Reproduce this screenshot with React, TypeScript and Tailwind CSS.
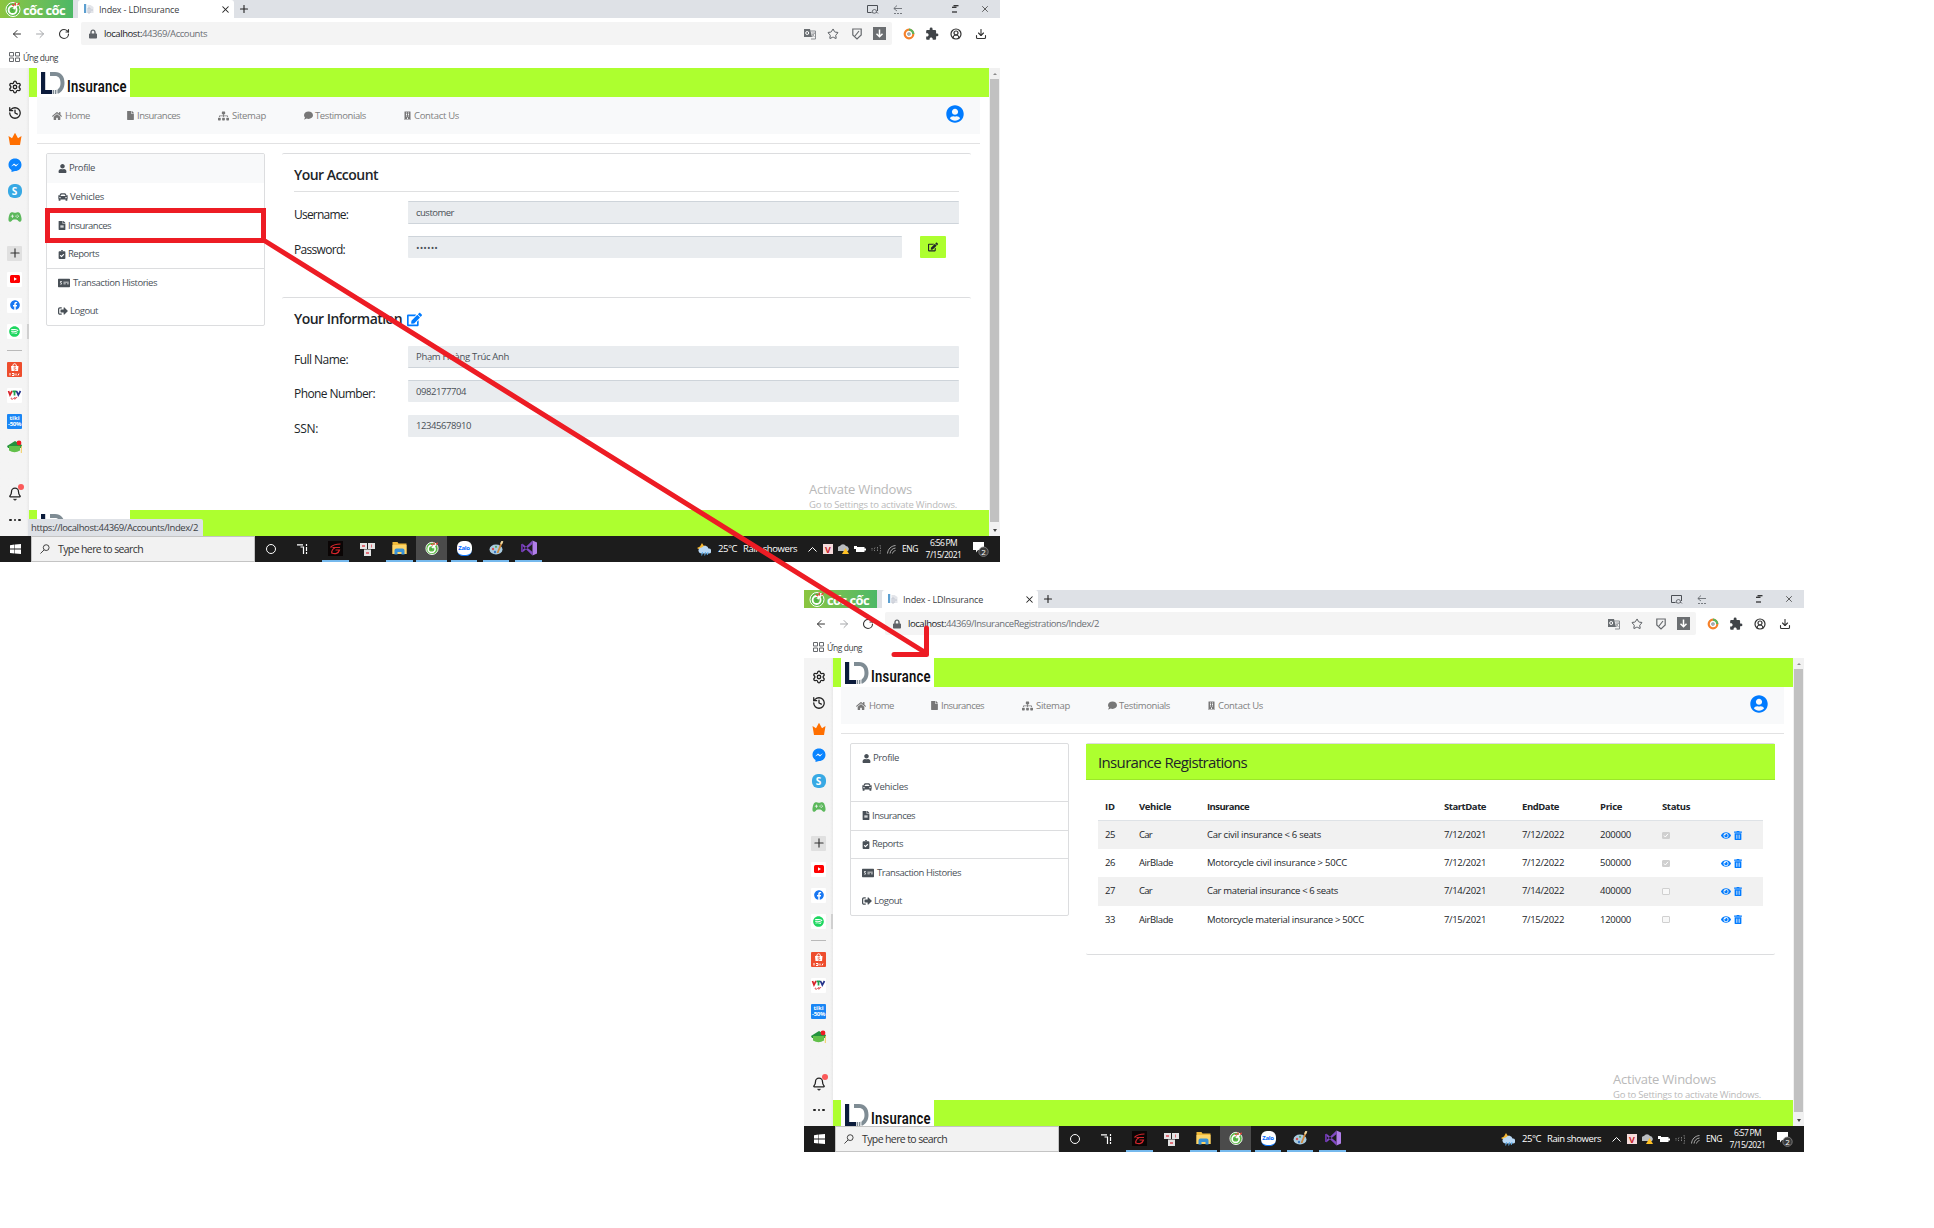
import { useLayoutEffect, useRef, useState, type ReactNode } from 'react';
import {
  FaHome, FaFile, FaSitemap, FaComment, FaBuilding, FaUserCircle, FaUser, FaCar, FaFileAlt,
  FaClipboardCheck, FaMoneyCheckAlt, FaSignOutAlt, FaEdit, FaEye, FaTrashAlt, FaSpotify,
  FaFacebook, FaLock, FaGraduationCap,
} from 'react-icons/fa';
import { MdExtension } from 'react-icons/md';
import { IoGameController } from 'react-icons/io5';
import { ArrowLeft, ArrowRight, RotateCw, X, Plus, Settings, History, Bell, Star, CircleUserRound, Download } from 'lucide-react';

/** One line of text whose letter spacing is adjusted so that it spans `w` pixels. */
function Fit({ w, className = '', children }: { w: number; className?: string; children: ReactNode }) {
  const ref = useRef<HTMLSpanElement>(null);
  const [spacing, setSpacing] = useState(0);
  useLayoutEffect(() => {
    const el = ref.current;
    if (!el) return;
    el.style.letterSpacing = '0px';
    const natural = el.getBoundingClientRect().width;
    const count = (el.textContent ?? '').length;
    setSpacing((w - natural) / count);
    el.style.letterSpacing = `${(w - natural) / count}px`;
  }, [w]);
  return (
    <span ref={ref} style={{ letterSpacing: `${spacing}px` }} className={`inline-block shrink-0 whitespace-nowrap ${className}`}>
      {children}
    </span>
  );
}

function CocCocMark({ className }: { className: string }) {
  return (
    <svg viewBox="0 0 16 16" className={className}>
      <circle cx="8" cy="8.5" r="7" fill="#5cb946" stroke="#fff" strokeWidth="1" />
      <circle cx="7.6" cy="9" r="4" fill="none" stroke="#fff" strokeWidth="1.8" />
      <path d="M7.5 9 13 3" stroke="#fff" strokeWidth="2" />
      <path d="M7 3.5 9 5M10 1.5l.6 3M12.5 4l2-2" stroke="#ee4035" strokeWidth="1.3" />
      <circle cx="7.6" cy="9" r="1.4" fill="#4bab43" />
    </svg>
  );
}

function Logo({ markOnly = false }: { markOnly?: boolean }) {
  return (
    <div className="flex h-[29px] w-[93px] shrink-0 items-start bg-white pl-[4px]">
      <svg viewBox="0 0 24 22" className="mt-[4px] h-[22px] w-[24px] shrink-0">
        <path d="M0 0h4.200v18h7v4H0z" fill="#0b1b3b" />
        <path d="M9 0h5c6 0 9.500 4 9.500 11 0 5-2.500 9-6.500 10.800V17c1.800-1.200 2.500-3.300 2.500-6 0-4.500-2-7-5.500-7H9z" fill="#7f8c94" />
        <path d="M12 18h1.200v4H12zM14 18h1.200v4H14zM15.800 17.500h.8v4h-.8z" fill="#7f8c94" />
      </svg>
      {!markOnly && (
        <span className="mt-[11px] ml-[2px] inline-block origin-left scale-x-[0.79] font-['Roboto'] text-[16.5px] leading-[15px] font-semibold tracking-[0.3px] text-[#111]">Insurance</span>
      )}
    </div>
  );
}

function TabStrip() {
  return (
    <div className="flex h-[18px] bg-[#dee1e6]">
      <div className="flex h-[18px] w-[73px] items-center bg-linear-to-r from-[#8bc53f] to-[#4cb866] pl-[5px]">
        <CocCocMark className="h-[16px] w-[16px] shrink-0" />
        <Fit w={42} className="mt-px ml-[2px] font-['Open_Sans'] text-[13px] leading-[16px] font-bold text-white">cốc cốc</Fit>
      </div>
      <div className="ml-[5px] flex h-[18px] w-[156px] items-center rounded-t-[3px] bg-white pl-[6px]">
        <svg viewBox="0 0 10 10" className="h-[10px] w-[10px]">
          <path d="M0 0h2.200v9H0z" fill="#5c9fd0" />
          <path d="M3.500 1h3l3 2v6h-6z" fill="#e3e5ea" />
          <path d="M4 4h2v5H4zM7 6h2" stroke="#c4c8d2" fill="none" />
        </svg>
        <Fit w={80} className="mt-px ml-[5px] text-[9px] leading-[14px] text-[#3c4043]">Index - LDInsurance</Fit>
        <X className="ml-[41px] h-[11px] w-[11px] text-[#222]" strokeWidth={2.200} />
      </div>
      <Plus className="mt-[3px] ml-[4px] h-[12px] w-[12px] text-[#222]" strokeWidth={2.200} />
      <div className="ml-auto flex h-[18px] items-center text-[#333]">
        <svg viewBox="0 0 12 9" className="h-[9px] w-[12px]" fill="none" stroke="#4b4f55">
          <path d="M4.500 7.500h-4v-7h10v5.500" />
          <path d="M5 7.500q0-3 2.500-3t2 3q-2 1.500-4.500 0M9.500 7l1.500 1.500" strokeWidth=".8" />
        </svg>
        <svg viewBox="0 0 10 9" className="ml-[14px] h-[9px] w-[10px]" fill="none" stroke="#6a6e74" strokeWidth=".9">
          <path d="M4 .5.8 3.500 4 6M1 3.500h8" />
          <path d="M1 8.500h8" strokeDasharray="2 1" />
        </svg>
        <svg viewBox="0 0 7 8" className="ml-[49px] h-[8px] w-[7px]" fill="none" stroke="#000">
          <path d="M1.500.8h5M0 2.200h4.500M0 7h5" strokeWidth="1.100" />
        </svg>
        <X className="mr-[10px] ml-[21px] h-[10px] w-[10px]" strokeWidth={1.800} />
      </div>
    </div>
  );
}

function Toolbar({ path }: { path: ReactNode }) {
  return (
    <div className="flex h-[31px] items-center bg-white">
      <ArrowLeft className="ml-[11px] h-[12px] w-[12px] text-[#333]" strokeWidth={2} />
      <ArrowRight className="ml-[11px] h-[12px] w-[12px] text-[#a5a7aa]" strokeWidth={2} />
      <RotateCw className="ml-[12px] h-[12px] w-[12px] text-[#333]" strokeWidth={2.200} />
      <div className="ml-[11px] flex h-[23px] w-[811px] items-center rounded-[2px] bg-[#f4f4f4] pl-[8px]">
        <FaLock className="h-[10px] w-[8px] text-[#5f6368]" />
        <div className="ml-[7px] flex text-[9.5px] leading-[14px]">
          <Fit w={38} className="text-[#202124]">localhost:</Fit>
          {path}
        </div>
        <div className="mr-[6px] ml-auto flex items-center">
          <svg viewBox="0 0 12 12" className="h-[12px] w-[12px]">
            <path d="M0 1h6l2 8H0z" fill="#6a6e72" />
            <path d="M6 3h5.500v8H7" fill="none" stroke="#8b8e92" />
            <circle cx="3.200" cy="5" r="1.500" fill="none" stroke="#fff" />
            <path d="M7.500 5h3.500M8 9l2.500-4M8 6l2.500 3" stroke="#8b8e92" strokeWidth=".8" />
          </svg>
          <Star className="ml-[11px] h-[12px] w-[12px] text-[#55595e]" strokeWidth={2} />
          <svg viewBox="0 0 10 12" className="ml-[13px] h-[12px] w-[10px]" fill="none" stroke="#66696d" strokeWidth="1.200">
            <path d="M.8 1h8.400v6L5 11 .8 7zM3 8l4-5" />
          </svg>
          <svg viewBox="0 0 13 13" className="ml-[11px] h-[13px] w-[13px]">
            <path d="M0 0h13v13H0z" fill="#6b6e71" />
            <path d="M6.500 2.500v7M3.500 6.700l3 3 3-3" fill="none" stroke="#fff" strokeWidth="1.500" />
          </svg>
        </div>
      </div>
      <svg viewBox="0 0 12 12" className="ml-[11px] h-[12px] w-[12px]" fill="none" strokeWidth="2.200">
        <circle cx="6" cy="6" r="4.300" stroke="#f5812a" />
        <path d="M6 1.700A4.300 4.300 0 0 1 10.300 6" stroke="#5ab55e" />
        <circle cx="6" cy="6" r="1.200" stroke="#8a9199" strokeWidth="1.200" />
      </svg>
      <MdExtension className="ml-[10px] h-[14px] w-[14px] text-[#404448]" />
      <CircleUserRound className="ml-[11px] h-[12px] w-[12px] text-[#333]" strokeWidth={2.400} />
      <Download className="ml-[13px] h-[12px] w-[12px] text-[#333]" strokeWidth={2.200} />
    </div>
  );
}

function Slot({ children, box = '' }: { children: ReactNode; box?: string }) {
  return (
    <div className="flex h-[26px] shrink-0 items-center pl-[7px]">
      <div className={`flex h-[15px] w-[15px] items-center justify-center overflow-hidden rounded-[1px] ${box}`}>{children}</div>
    </div>
  );
}

function BrowserRail() {
  return (
    <div className="flex h-[468px] w-[29px] shrink-0 flex-col bg-linear-to-r from-[#f4f4f4] from-90% to-[#e9e9e9] pt-[6px]">
      <Slot><Settings className="h-[14px] w-[14px] text-[#222]" strokeWidth={2.200} /></Slot>
      <Slot><History className="h-[14px] w-[14px] text-[#222]" strokeWidth={2.200} /></Slot>
      <Slot>
        <svg viewBox="0 0 14 14" className="h-[14px] w-[14px]"><path d="M.5 4 4 6.200 7 .8l3 5.400L13.500 4 12 13H2z" fill="#ff6f00" /></svg>
      </Slot>
      <Slot>
        <svg viewBox="0 0 14 14" className="h-[14px] w-[14px]">
          <path d="M7 .5c3.800 0 6.500 2.700 6.500 6.200S10.800 13 7 13l-3.500 1V12C1.600 10.800.5 9 .5 6.700.5 3.200 3.200.5 7 .5z" fill="#0a84ff" />
          <path d="m3 8.500 3-3 2 1.500 3-1.800-3 3.300-2-1.500z" fill="#fff" />
        </svg>
      </Slot>
      <Slot>
        <div className="flex h-[14px] w-[14px] items-center justify-center rounded-[6px] bg-[#38a9e4] text-[10px] leading-none font-bold text-white">S</div>
      </Slot>
      <Slot><IoGameController className="h-[14px] w-[14px] text-[#5cb85c]" /></Slot>
      <div className="h-[10px] shrink-0" />
      <Slot box="bg-[#e0e0e0]"><Plus className="h-[14px] w-[14px] text-[#333]" strokeWidth={2} /></Slot>
      <Slot box="bg-white">
        <svg viewBox="0 0 10 8" className="h-[8px] w-[10px]"><rect width="10" height="8" rx="1.500" fill="#f00" /><path d="m4 2.200 3 1.800-3 1.800z" fill="#fff" /></svg>
      </Slot>
      <Slot box="bg-white"><FaFacebook className="h-[10px] w-[10px] text-[#1877f2]" /></Slot>
      <div className="flex">
        <div className="w-[29px]"><Slot box="bg-white"><FaSpotify className="h-[11px] w-[11px] text-[#1ed760]" /></Slot></div>
        <div className="mt-[6px] -ml-[2px] h-[15px] w-[2px] bg-[#d0d0d0]" />
      </div>
      <div className="mx-[7px] mt-[6px] h-px shrink-0 bg-[#b9b9b9]" />
      <div className="h-[5px] shrink-0" />
      <Slot box="bg-[#ee4d2d]">
        <svg viewBox="0 0 15 15" className="h-[15px] w-[15px]">
          <path d="M4 4h7.500l-.5 5H4.500z" fill="#fff" />
          <path d="M5.800 4c0-3 3.600-3 3.600 0" fill="none" stroke="#fff" />
          <path d="M9 5.500c-1-.8-2.500-.3-2 .8s2 .3 1.800 1.200-1.500.8-2 .3" fill="none" stroke="#ee4d2d" strokeWidth=".8" />
          <path d="M3 11v2.500M5 11.500h2v2H5M9 11.500v2M11 13.500l1-2" stroke="#fff" fill="none" />
        </svg>
      </Slot>
      <Slot box="bg-white">
        <svg viewBox="0 0 15 15" className="h-[15px] w-[15px]" fill="none">
          <path d="m1.500 3 1.500 4 2-4" stroke="#d8232a" strokeWidth="1.700" />
          <path d="M5.500 3.400h4M7.500 3v4.500" stroke="#1f9d4d" strokeWidth="1.700" />
          <path d="m9.500 3 1.800 4L13.500 3" stroke="#26348b" strokeWidth="1.700" />
          <path d="M5 9.500c-1.500 1-.5 2.500.8 1.500s3-2.500 2.200-1-.5 1.500.8.500L10 9" stroke="#d8232a" strokeWidth=".8" />
        </svg>
      </Slot>
      <Slot box="flex-col bg-[#1a86f5] text-white">
        <span className="text-[6px] leading-[6px] font-bold">tiki</span>
        <span className="text-[6px] leading-[7px] font-bold tracking-[-0.3px]">-50%</span>
      </Slot>
      <Slot>
        <svg viewBox="0 0 15 14" className="h-[14px] w-[15px]">
          <path d="M0 6 8 1l7 4-1 3H1z" fill="#23923d" />
          <path d="M2 6h11v4.500q-5.500 3.500-11 0z" fill="#62c04a" />
          <path d="M14.300 6v7" stroke="#f3c74a" strokeWidth=".9" />
          <circle cx="12" cy="3" r="2.400" fill="#ee1c25" />
        </svg>
      </Slot>
      <div className="h-[21px] shrink-0" />
      <div className="relative">
        <Slot><Bell className="h-[14px] w-[14px] text-[#222]" strokeWidth={2.200} /></Slot>
        <div className="absolute top-[3px] left-[18px] h-[6px] w-[6px] rounded-full bg-[#fb5a5a]" />
      </div>
      <div className="flex h-[26px] items-center gap-[2px] pl-[9px]">
        <i className="h-[2.500px] w-[2.500px] rounded-full bg-[#222]" />
        <i className="h-[2.500px] w-[2.500px] rounded-full bg-[#222]" />
        <i className="h-[2.500px] w-[2.500px] rounded-full bg-[#222]" />
      </div>
    </div>
  );
}

function SiteNav() {
  return (
    <div className="ml-[8px] h-[37px] w-[943px] bg-[#f8f9fa] text-[9.5px] leading-[14px] text-[#808080]">
      <div className="flex h-[37px] items-center pl-[15px]">
        <div className="flex w-[75px] items-center"><FaHome className="h-[10px] w-[10px] text-[#777]" /><Fit w={25} className="ml-[3px]">Home</Fit></div>
        <div className="flex w-[91px] items-center"><FaFile className="h-[9px] w-[7px] text-[#777]" /><Fit w={43} className="ml-[3px]">Insurances</Fit></div>
        <div className="flex w-[86px] items-center"><FaSitemap className="h-[10px] w-[11px] text-[#777]" /><Fit w={34} className="ml-[3px]">Sitemap</Fit></div>
        <div className="flex w-[100px] items-center"><FaComment className="h-[9px] w-[9px] text-[#777]" /><Fit w={51} className="ml-[2px]">Testimonials</Fit></div>
        <div className="flex items-center"><FaBuilding className="h-[9px] w-[7px] text-[#777]" /><Fit w={45} className="ml-[3px]">Contact Us</Fit></div>
        <FaUserCircle className="mr-[16px] mb-[3px] ml-auto h-[18px] w-[18px] text-[#007bff]" />
      </div>
    </div>
  );
}

const menu = [
  { label: 'Profile', w: 26, Icon: FaUser, icon: 'h-[9px] w-[9px]', gap: 'ml-[2px]', line: '' },
  { label: 'Vehicles', w: 34, Icon: FaCar, icon: 'h-[10px] w-[10px]', gap: 'ml-[2px]', line: '' },
  { label: 'Insurances', w: 43, Icon: FaFileAlt, icon: 'h-[9px] w-[8px]', gap: 'ml-[2px]', line: 'border-t border-[#dcdddf]' },
  { label: 'Reports', w: 31, Icon: FaClipboardCheck, icon: 'h-[9px] w-[8px]', gap: 'ml-[2px]', line: 'border-t border-[#dcdddf]' },
  { label: 'Transaction Histories', w: 84, Icon: FaMoneyCheckAlt, icon: 'h-[12px] w-[12px]', gap: 'ml-[3px]', line: 'border-t border-[#dcdddf]' },
  { label: 'Logout', w: 28, Icon: FaSignOutAlt, icon: 'h-[10px] w-[10px]', gap: 'ml-[2px]', line: '' },
];

function AccountMenu({ active }: { active: boolean }) {
  return (
    <div className="grid h-[173px] w-[219px] shrink-0 grid-rows-6 overflow-hidden rounded-[2px] border border-[#dcdddf] text-[9.5px] leading-[14px] text-[#495057]">
      {menu.map(({ label, w, Icon, icon, gap, line }, i) => (
        <div key={label} className={`flex items-center pl-[11px] ${line} ${active && i === 0 ? 'bg-[#f8f9fa]' : ''}`}>
          <Icon className={icon} />
          <Fit w={w} className={gap}>{label}</Fit>
        </div>
      ))}
    </div>
  );
}

function Field({ label, w, value, vw, box, gap }: { label: string; w: number; value: string; vw: number; box: string; gap: string }) {
  return (
    <div className={`flex ${gap}`}>
      <div className="h-[22px] w-[114px] pt-[5px] text-[12px] leading-[17px] text-[#212529]"><Fit w={w}>{label}</Fit></div>
      <div className={`flex items-center rounded-[1px] border-[#ced4da] bg-[#e9ecef] pl-[8px] text-[9.5px] leading-[14px] text-[#495057] ${box}`}>
        <Fit w={vw}>{value}</Fit>
      </div>
    </div>
  );
}

function AccountPage() {
  return (
    <div className="ml-[17px] w-[689px]">
      <div className="h-[131px] rounded-[2px] border-t border-[#dcdddf] pl-[12px]">
        <h5 className="flex h-[37px] items-center pt-[4px] text-[14px] leading-[20px] font-semibold text-[#212529]"><Fit w={84}>Your Account</Fit></h5>
        <div className="mr-[12px] h-px bg-[#dfe0e1]" />
        <Field gap="mt-[9px]" label="Username:" w={54} value="customer" vw={38} box="w-[551px] h-[23px] border-y" />
        <div className="mt-[12px] flex">
          <Field gap="" label="Password:" w={51} value="••••••" vw={22} box="w-[494px] h-[22px] border-t" />
          <button className="ml-[18px] flex h-[22px] w-[26px] items-center justify-center rounded-[1px] bg-[#adff2f] text-[#212529]"><FaEdit className="h-[10px] w-[10px]" /></button>
        </div>
      </div>
      <div className="mt-[13px] h-[164px] rounded-[2px] border-t border-[#dcdddf] pl-[12px]">
        <h5 className="flex h-[48px] items-center pb-[6px] text-[14px] leading-[20px] font-semibold text-[#212529]">
          <Fit w={108}>Your Information</Fit>
          <FaEdit className="ml-[5px] h-[15px] w-[15px] text-[#007bff]" />
        </h5>
        <Field gap="" label="Full Name:" w={54} value="Phạm Hoàng Trúc Anh" vw={93} box="w-[551px] h-[22px] border-b" />
        <Field gap="mt-[12px]" label="Phone Number:" w={81} value="0982177704" vw={50} box="w-[551px] h-[22px] border-t" />
        <Field gap="mt-[13px]" label="SSN:" w={24} value="12345678910" vw={55} box="w-[551px] h-[22px]" />
      </div>
    </div>
  );
}

const rows = [
  { id: '25', vehicle: 'Car', vw: 13, name: 'Car civil insurance < 6 seats', nw: 114, start: '7/12/2021', end: '7/12/2022', price: '200000', on: true },
  { id: '26', vehicle: 'AirBlade', vw: 34, name: 'Motorcycle civil insurance > 50CC', nw: 140, start: '7/12/2021', end: '7/12/2022', price: '500000', on: true },
  { id: '27', vehicle: 'Car', vw: 13, name: 'Car material insurance < 6 seats', nw: 131, start: '7/14/2021', end: '7/14/2022', price: '400000', on: false },
  { id: '33', vehicle: 'AirBlade', vw: 34, name: 'Motorcycle material insurance > 50CC', nw: 157, start: '7/15/2021', end: '7/15/2022', price: '120000', on: false },
];

function RegistrationsPage() {
  return (
    <div className="ml-[17px] flex h-[212px] w-[689px] flex-col rounded-[2px] border-y border-[#dcdddf]">
      <div className="flex h-[36px] items-center border-b border-[#9be62a] bg-[#adff2f] pl-[12px] text-[15px] leading-[20px] text-[#212529]"><Fit w={149}>Insurance Registrations</Fit></div>
      <div className="mx-[12px] mt-[12px] text-[9.5px] leading-[14px] text-[#212529]">
        <div className="grid h-[29px] grid-cols-[34px_68px_237px_78px_78px_62px_59px_50px] items-center border-b border-[#dee2e6] pt-px pl-[7px] font-bold">
          <Fit w={10} className="justify-self-start">ID</Fit>
          <Fit w={32} className="justify-self-start">Vehicle</Fit>
          <Fit w={42} className="justify-self-start">Insurance</Fit>
          <Fit w={42} className="justify-self-start">StartDate</Fit>
          <Fit w={37} className="justify-self-start">EndDate</Fit>
          <Fit w={22} className="justify-self-start">Price</Fit>
          <Fit w={28} className="justify-self-start">Status</Fit>
        </div>
        {rows.map((r) => (
          <div key={r.id} className="grid h-[28.2px] grid-cols-[34px_68px_237px_78px_78px_62px_59px_50px] items-center pl-[7px] even:bg-[#f1f1f1]">
            <Fit w={10} className="justify-self-start">{r.id}</Fit>
            <Fit w={r.vw} className="justify-self-start">{r.vehicle}</Fit>
            <Fit w={r.nw} className="justify-self-start">{r.name}</Fit>
            <Fit w={42} className="justify-self-start">{r.start}</Fit>
            <Fit w={42} className="justify-self-start">{r.end}</Fit>
            <Fit w={31} className="justify-self-start">{r.price}</Fit>
            <div className={`flex h-[7px] w-[8px] items-center justify-center rounded-[1px] border ${r.on ? 'border-[#cfcfcf] bg-[#cfcfcf]' : 'border-[#d0d0d0] bg-[#f8f8f8]'}`}>
              {r.on && <svg viewBox="0 0 6 5" className="h-[5px] w-[6px]"><path d="m1 2.500 1.300 1.500L5 .8" fill="none" stroke="#fff" /></svg>}
            </div>
            <div className="flex items-center text-[#007bff]"><FaEye className="h-[11px] w-[10px]" /><FaTrashAlt className="ml-[3px] h-[9px] w-[8px]" /></div>
          </div>
        ))}
      </div>
    </div>
  );
}

function TaskItem({ children, className = '' }: { children: ReactNode; className?: string }) {
  return <div className={`flex h-[26px] shrink-0 items-center justify-center border-[#76b9ed] ${className}`}>{children}</div>;
}

function Taskbar({ time }: { time: string }) {
  return (
    <div className="flex h-[26px] bg-[#1c1c1c] text-white">
      <div className="flex h-[26px] w-[31px] items-center pl-[10px]">
        <svg viewBox="0 0 11 10" className="h-[10px] w-[11px]" fill="#fff"><path d="M0 1.200 4.500.6v4H0zM5 .5 11 0v4.600H5zM0 5.400h4.500v4L0 8.900zM5 5.400h6V10l-6-.6z" /></svg>
      </div>
      <div className="flex h-[26px] w-[224px] items-center border border-[#c4c4c4] bg-[#f2f2f2] pl-[8px]">
        <svg viewBox="0 0 11 11" className="h-[10px] w-[10px]" fill="none" stroke="#333"><circle cx="6.800" cy="4" r="3.200" /><path d="M4.500 6.500.5 10.500" /></svg>
        <Fit w={85} className="ml-[8px] text-[10.5px] leading-[14px] text-[#333]">Type here to search</Fit>
      </div>
      <TaskItem className="w-[31px]"><div className="h-[10px] w-[10px] rounded-full border-[1.500px] border-white" /></TaskItem>
      <TaskItem className="w-[33px]">
        <svg viewBox="0 0 11 10" className="h-[10px] w-[11px]" fill="none" stroke="#fff"><path d="M0 .8h6M3.500 3H6.500v7" strokeWidth="1.200" /><path d="M9.500 0v2M9.500 3v4M9.500 8v2" strokeWidth="1.200" /></svg>
      </TaskItem>
      <TaskItem className="ml-[3px] w-[27px] border-b-2">
        <svg viewBox="0 0 15 15" className="mt-px h-[15px] w-[15px]"><path d="M0 0h15v15H0z" fill="#0a0505" /><path d="M2.500 6.500C5 3.500 8 3 12.500 3M4.500 6.500h7.500M4 12.500C3 10 5 7.500 7 7M4 12c3 1.500 6.500.5 7.500-3H7.500" fill="none" stroke="#d5262c" strokeWidth="1.200" /></svg>
      </TaskItem>
      <TaskItem className="w-[37px]">
        <svg viewBox="0 0 15 13" className="h-[13px] w-[15px]"><path d="M0 0h7v6H0zM8 0h7v6H8zM4 6.500h7V13H4z" fill="#e3e3e3" /><path d="M2 2h3v2H2zM11 1.500h1v3h-1zM6 9h3v2H6z" fill="#e0707a" /></svg>
      </TaskItem>
      <TaskItem className="w-[27px] border-b-2">
        <svg viewBox="0 0 15 13" className="h-[13px] w-[15px]"><path d="M.5 0h5l1 1.500h8V12H.5z" fill="#f0b93a" /><path d="M.5 3h14v9H.5z" fill="#fdd56a" /><path d="M2.500 12.500V8.500q0-2 2-2h6q2 0 2 2v4h-3V10h-4v2.500z" fill="#3a93d8" /></svg>
      </TaskItem>
      <TaskItem className="ml-[3px] w-[31px] border-b-2 bg-[#4b4b4b]"><CocCocMark className="h-[14px] w-[14px]" /></TaskItem>
      <TaskItem className="ml-[4px] w-[26px] border-b-2">
        <div className="flex h-[15px] w-[15px] items-center justify-center overflow-hidden rounded-[6px] border-b border-[#0573ff] bg-white text-[6px] leading-none font-bold tracking-[-0.3px] text-[#0068ff]">Zalo</div>
      </TaskItem>
      <TaskItem className="ml-[6px] w-[26px] border-b-2">
        <svg viewBox="0 0 15 14" className="h-[14px] w-[15px]"><ellipse cx="7" cy="8.500" rx="6.500" ry="5" fill="#a9cbe0" /><circle cx="4" cy="8" r="1.200" fill="#d9534f" /><circle cx="7" cy="5.800" r="1.100" fill="#58a55c" /><circle cx="6" cy="11" r="1.200" fill="#3b78c2" /><path d="m8.500 12 4.500-11" stroke="#d08a3c" strokeWidth="1.800" /><path d="m12 3 1.500-3" stroke="#efd9a0" strokeWidth="2" /></svg>
      </TaskItem>
      <TaskItem className="ml-[6px] w-[27px] border-b-2">
        <svg viewBox="0 0 16 16" className="h-[16px] w-[16px]"><path d="M11.500.5 16 2.500v11l-4.500 2z" fill="#b07ee8" /><path d="m0 4.500 1.500-.8L11.500 12v3.500zM0 11.500l1.500.8 10-8.300V.5z" fill="#8149c4" /><path d="M0 4.500v7l1.800.8V3.700z" fill="#6a35a8" /></svg>
      </TaskItem>
      <div className="ml-auto flex h-[26px] items-center text-[9.500px] leading-[14px]">
        <svg viewBox="0 0 14 13" className="h-[13px] w-[14px]"><path d="m5 0 1.500 2.500L9 3 7.500 6 3 7 0 5l3-1.500z" fill="#f7b731" /><path d="M4 10.500a3 3 0 0 1 1-6 3.500 3.500 0 0 1 6.500 1A2.500 2.500 0 0 1 12 10.500z" fill="#b9d8f5" /><path d="m5.500 9-.8 3.500M8.500 9l-.8 3.500M11 9l-.8 3" stroke="#5aaeee" /></svg>
        <Fit w={19} className="ml-[7px]">25°C</Fit>
        <Fit w={54} className="ml-[6px]">Rain showers</Fit>
        <svg viewBox="0 0 9 5" className="ml-[11px] h-[5px] w-[9px]" fill="none" stroke="#fff"><path d="m.5 4.500 4-4 4 4" /></svg>
        <div className="ml-[6px] flex h-[10px] w-[10px] items-center justify-center bg-[#f6dcdc] text-[9px] leading-none font-bold text-[#c9252d]">V</div>
        <svg viewBox="0 0 11 10" className="ml-[5px] h-[10px] w-[11px]"><path d="M0 7a3 3 0 0 1 2-5 3.500 3.500 0 0 1 6 0 3 3 0 0 1 2 5z" fill="#b9bcc0" /><path d="m7.500 4 3.500 6H4z" fill="#ffc125" /></svg>
        <svg viewBox="0 0 12 7" className="ml-[5px] h-[7px] w-[12px]" fill="#fff"><path d="M2 1h8.500v1.500H12v2h-1.500V6H2zM0 0h3v3H0z" /></svg>
        <svg viewBox="0 0 10 9" className="ml-[5px] h-[9px] w-[10px]" fill="none" stroke="#999" strokeWidth=".8"><path d="M1 3v3M4 2.500 3 4.500l1 2M6.500 2v5M9 0q1 4.500 0 9" strokeDasharray="1.500 1" /></svg>
        <svg viewBox="0 0 9 9" className="ml-[6px] h-[9px] w-[9px]" fill="none" stroke="#bbb" strokeWidth=".9"><path d="M.5 8.500C1 4 4 1 8.500.5M3 8.500c.5-3 2-5 5.500-5.500M5.500 8.500c.5-1.500 1-2.500 3-3" /></svg>
        <Fit w={16} className="ml-[6px] text-[8.500px]">ENG</Fit>
        <div className="ml-[7px] flex w-[37px] flex-col items-center text-[8.500px] leading-[12px]">
          <Fit w={27}>{time}</Fit>
          <Fit w={36}>7/15/2021</Fit>
        </div>
        <svg viewBox="0 0 16 15" className="mr-[11px] ml-[11px] h-[15px] w-[16px]"><path d="M0 0h11v8H5l-2 2.500V8H0z" fill="#fff" /><circle cx="10.500" cy="9.700" r="4.700" fill="#3a3a3a" stroke="#8d8d8d" strokeWidth=".8" /><text x="10.500" y="12.500" fontSize="8" fill="#fff" textAnchor="middle">2</text></svg>
      </div>
    </div>
  );
}

function BrowserWindow({ path, time, active, status, children }: { path: ReactNode; time: string; active: boolean; status?: ReactNode; children: ReactNode }) {
  return (
    <div className="h-[562px] w-[1000px] bg-white">
      <TabStrip />
      <Toolbar path={path} />
      <div className="flex h-[19px] items-start pt-[2px] pl-[9px]">
        <svg viewBox="0 0 11 10" className="mt-px h-[10px] w-[11px]" fill="none" stroke="#66696d"><path d="M.5.5h4v3.500h-4zM6.500.5h4v3.500h-4zM.5 6h4v3.500h-4zM6.500 6h4v3.500h-4z" /></svg>
        <Fit w={35} className="ml-[3px] text-[8.500px] leading-[13px] text-[#3c4043]">Ứng dụng</Fit>
      </div>
      <div className="relative flex h-[468px]">
        <BrowserRail />
        <div className="flex h-[468px] w-[960px] flex-col">
          <div className="flex h-[29px] shrink-0 bg-[#adff2f] pl-[8px]"><Logo /></div>
          <SiteNav />
          <div className="mt-[9px] ml-[8px] h-px w-[943px] shrink-0 bg-[#e2e2e3]" />
          <div className="mt-[9px] flex h-[357px] shrink-0 items-start pl-[17px]">
            <AccountMenu active={active} />
            {children}
          </div>
          <div className="flex h-[26px] shrink-0 overflow-hidden bg-[#adff2f] pl-[8px]"><Logo markOnly={Boolean(status)} /></div>
        </div>
        <div className="flex h-[468px] w-[11px] flex-col items-center bg-[#f1f1f1]">
          <div className="mt-[5px] h-0 w-0 border-x-[2px] border-b-[2px] border-x-transparent border-b-[#8a8a8a]" />
          <div className="mt-[4px] h-[443px] w-[9px] bg-[#c1c1c1]" />
          <div className="mt-[7px] h-0 w-0 border-x-[2.500px] border-t-[3px] border-x-transparent border-t-[#444]" />
        </div>
        <div className="absolute top-[412px] left-[809px] flex flex-col items-start text-[#b9b9b9]">
          <Fit w={103} className="text-[13px] leading-[18px]">Activate Windows</Fit>
          <Fit w={148} className="text-[9.500px] leading-[14px]">Go to Settings to activate Windows.</Fit>
        </div>
        {status}
      </div>
      <Taskbar time={time} />
    </div>
  );
}

export default function App() {
  return (
    <main className="relative h-[1228px] w-[1934px] overflow-hidden bg-white font-['Open_Sans','Noto_Sans',sans-serif]">
      <div className="absolute top-0 left-0">
        <BrowserWindow
          active
          time="6:56 PM"
          path={<Fit w={65} className="text-[#6b6f74]">44369/Accounts</Fit>}
          status={
            <div className="absolute bottom-0 left-[28px] flex h-[17px] w-[175px] items-center rounded-tr-[2px] bg-[#dee1e6] pt-px pl-[3px] text-[9.500px] leading-[14px] text-[#3c4043]">
              <Fit w={167}>https://localhost:44369/Accounts/Index/2</Fit>
            </div>
          }
        >
          <AccountPage />
        </BrowserWindow>
      </div>
      <div className="absolute top-[590px] left-[804px]">
        <BrowserWindow active={false} time="6:57 PM" path={<Fit w={153} className="text-[#6b6f74]">44369/InsuranceRegistrations/Index/2</Fit>}>
          <RegistrationsPage />
        </BrowserWindow>
      </div>
      <div className="absolute top-[208px] left-[45px] h-[35px] w-[221px] border-[5px] border-[#ed1c24]" />
      <svg viewBox="0 0 1934 1228" className="pointer-events-none absolute top-0 left-0 h-[1228px] w-[1934px]" fill="none" stroke="#ed1c24" strokeWidth="5" strokeLinecap="round">
        <path d="M265 241 926 653" />
        <path d="M926.500 628v26.500H894" strokeLinejoin="round" />
      </svg>
    </main>
  );
}
